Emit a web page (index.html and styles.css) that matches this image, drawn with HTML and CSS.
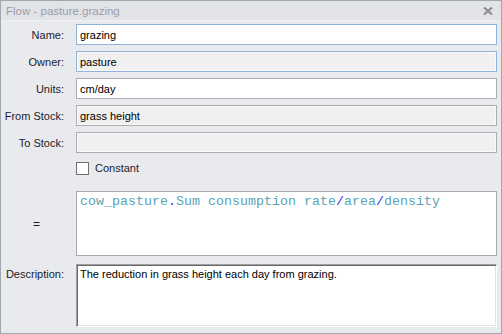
FILE: index.html
```html
<!DOCTYPE html>
<html>
<head>
<meta charset="utf-8">
<link rel="stylesheet" href="styles.css">
</head>
<body>
<div class="window">
  <div class="titlebar">
    <span class="title">Flow - pasture.grazing</span>
    <svg class="close" width="10" height="8" viewBox="0 0 10 8"><path d="M1 0.5 L9 7.5 M9 0.5 L1 7.5" stroke="#8b8c93" stroke-width="2.2"/></svg>
  </div>
  <div class="content">
    <div class="row">
      <label class="lbl">Name:</label>
      <div class="field white focus">grazing</div>
    </div>
    <div class="row">
      <label class="lbl">Owner:</label>
      <div class="field grey focus">pasture</div>
    </div>
    <div class="row">
      <label class="lbl">Units:</label>
      <div class="field white">cm/day</div>
    </div>
    <div class="row">
      <label class="lbl">From Stock:</label>
      <div class="field grey">grass height</div>
    </div>
    <div class="row">
      <label class="lbl">To Stock:</label>
      <div class="field grey"></div>
    </div>
    <div class="row check-row">
      <span class="lbl"></span>
      <label class="check"><span class="box"></span>Constant</label>
    </div>
    <div class="row eq-row">
      <span class="lbl eq">=</span>
      <div class="equation"><span class="v">cow_pasture</span><span class="op">.</span><span class="v">Sum consumption rate</span><span class="op">/</span><span class="v">area</span><span class="op">/</span><span class="v">density</span></div>
    </div>
    <div class="row desc-row">
      <label class="lbl top">Description:</label>
      <div class="desc">The reduction in grass height each day from grazing.</div>
    </div>
  </div>
</div>
</body>
</html>
```
FILE: styles.css
```css
html, body {
  margin: 0;
  padding: 0;
  background: #e9eaee;
}
.window {
  width: 502px;
  height: 334px;
  box-sizing: border-box;
  border: 1px solid #a4a6ad;
  background: #e9eaee;
  font-family: "Liberation Sans", Arial, sans-serif;
  font-size: 11px;
  color: #1c1c2a;
  display: flex;
  flex-direction: column;
}
.titlebar {
  height: 19px;
  background: #e2e3e7;
  border-bottom: 1px solid #eef0f3;
  display: flex;
  align-items: center;
  justify-content: space-between;
  padding: 0 8px 0 5px;
}
.title {
  color: #9c9ea6;
  font-size: 11.5px;
}
.close {
  margin-top: 1px;
}
.content {
  display: flex;
  flex-direction: column;
  gap: 6px;
  padding: 3px 4px 0 0;
}
.row {
  display: flex;
  align-items: center;
  gap: 12px;
}
.lbl {
  width: 63px;
  flex: none;
  text-align: right;
}
.lbl.eq {
  text-align: center;
  padding-left: 8px;
  width: 55px;
  font-size: 12px;
}
.field {
  flex: 1;
  height: 21px;
  box-sizing: border-box;
  border: 1px solid #abadb3;
  padding: 0 3px;
  display: flex;
  align-items: center;
  color: #000;
  font-size: 11px;
}
.field.white { background: #fff; }
.field.grey { background: #f0f0f0; box-shadow: inset 0 0 0 1px #fafafa; }
.field.focus { border-color: #90b4de; }
.check-row {
  height: 17px;
  margin-top: 0;
}
.check {
  display: flex;
  align-items: center;
  gap: 6px;
  font-size: 11px;
  color: #1c1c2a;
}
.box {
  width: 11px;
  height: 11px;
  border: 1px solid #707070;
  background: #fff;
  margin-top: 1px;
}
.eq-row {
  margin-top: 9px;
}
.equation {
  flex: 1;
  height: 65px;
  box-sizing: border-box;
  border: 1px solid #a9aab0;
  background: #fff;
  padding: 2px 3px;
  font-family: "Liberation Mono", "Courier New", monospace;
  font-size: 13.33px;
  line-height: 16px;
}
.equation .v { color: #5ba3b4; }
.equation .op { color: #3333ff; }
.desc-row {
  align-items: flex-start;
  margin-top: 2px;
}
.lbl.top {
  padding-top: 4px;
}
.desc {
  flex: 1;
  height: 63px;
  box-sizing: border-box;
  background: #fff;
  border-top: 1px solid #a0a0a0;
  border-left: 1px solid #a0a0a0;
  border-right: 1px solid #ffffff;
  border-bottom: 1px solid #ffffff;
  box-shadow: inset 1px 1px 0 #696969, inset -1px -1px 0 #e3e3e3;
  padding: 3px 3px;
  color: #000;
  font-size: 11px;
}
```
